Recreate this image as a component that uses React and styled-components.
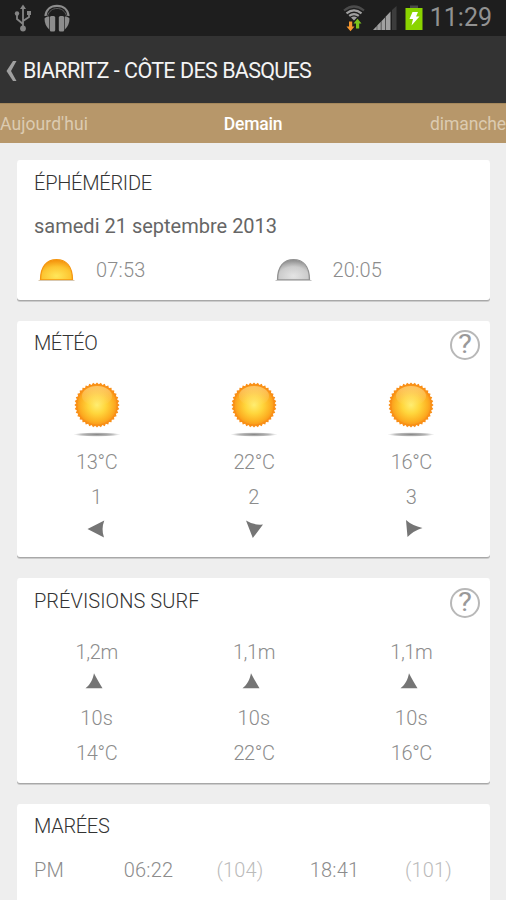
import React from 'react'
import styled, { createGlobalStyle } from 'styled-components'

const GlobalStyle = createGlobalStyle`
  * {
    box-sizing: border-box;
  }
  body {
    margin: 0;
    background-color: #eeeeee;
    font-family: Roboto, 'Liberation Sans', sans-serif;
  }
`

const Screen = styled.div`
  width: 506px;
  height: 900px;
  overflow: hidden;
  background-color: #eeeeee;
`

const StatusBar = styled.div`
  display: flex;
  align-items: center;
  justify-content: space-between;
  height: 36px;
  padding: 0 14px 0 12px;
  background-color: #1e1e1e;
`

const StatusGroup = styled.div`
  display: flex;
  align-items: center;
  gap: ${props => props.$gap}px;
`

const Clock = styled.span`
  font-size: 25px;
  font-weight: 400;
  line-height: 36px;
  color: #929292;
`

const Header = styled.header`
  display: flex;
  align-items: center;
  gap: 6px;
  height: 67px;
  padding: 2px 0 0 6px;
  background-color: #333333;
`

const Title = styled.h1`
  margin: 0;
  font-size: 21.5px;
  font-weight: 400;
  letter-spacing: -0.7px;
  word-spacing: 0.5px;
  white-space: nowrap;
  color: #f4f4f4;
`

const Tabs = styled.nav`
  display: flex;
  align-items: center;
  justify-content: space-between;
  height: 40px;
  padding-top: 1px;
  border-top: 1px solid #a5885c;
  background-color: #b7976a;
`

const Tab = styled.span`
  flex: 1;
  text-align: ${props => props.$align};
  font-size: 17.5px;
  font-weight: ${props => (props.$active ? 500 : 400)};
  letter-spacing: ${props => props.$spacing || 0}px;
  color: ${props => (props.$active ? '#ffffff' : '#dccbb1')};
`

const Cards = styled.main`
  display: flex;
  flex-direction: column;
  gap: 21px;
  padding: 17px 16px 0 17px;
`

const Card = styled.section`
  flex: none;
  height: ${props => props.$height}px;
  border-radius: 3px;
  background-color: #ffffff;
  box-shadow: 0 1px 0 #a8a8a8, 0 2px 0 #cccccc;
`

const CardHeader = styled.div`
  display: flex;
  align-items: center;
  justify-content: space-between;
  height: ${props => props.$height || 46}px;
  padding: 0 10px 0 17px;
`

const CardTitle = styled.h2`
  margin: 0;
  font-size: 20px;
  font-weight: 300;
  letter-spacing: ${props => props.$spacing || 0}px;
  color: #333333;
`

const Help = styled.span`
  display: flex;
  align-items: center;
  justify-content: center;
  width: 30px;
  height: 30px;
  margin-top: 3px;
  border: 2px solid #b8b8b8;
  border-radius: 50%;
  font-size: 25px;
  font-weight: 400;
  line-height: 26px;
  color: #999999;

  & > span {
    transform: scaleX(1.18);
  }
`

const DateLine = styled.div`
  height: 40px;
  padding-left: 17px;
  font-size: 20px;
  font-weight: 400;
  line-height: 40px;
  color: #666666;
`

const Ephemeris = styled.div`
  display: grid;
  grid-template-columns: 1fr 1fr;
  height: 48px;
`

const EphemerisItem = styled.div`
  display: flex;
  align-items: center;
  gap: 21px;
  padding-left: 21px;
`

const Columns = styled.div`
  display: grid;
  grid-template-columns: repeat(3, 1fr);
  padding-left: 1px;
`

const Column = styled.div`
  display: flex;
  flex-direction: column;
  align-items: center;
  padding-top: ${props => props.$top}px;
`

const Value = styled.span`
  margin-top: ${props => props.$top || 0}px;
  font-size: 20px;
  font-weight: 300;
  line-height: 35px;
  letter-spacing: ${props => (props.$tight ? -0.4 : 0.2)}px;
  color: ${props => (props.$faint ? '#bbbbbb' : '#8c8c8c')};
`

const ArrowBox = styled.div`
  display: flex;
  height: ${props => props.$height}px;
  padding-top: ${props => props.$top}px;
  padding-left: ${props => props.$left || 0}px;
  padding-right: ${props => props.$right || 0}px;
`

const TideRow = styled.div`
  display: grid;
  grid-template-columns: 69px 91px 92px 97px 91px;
  height: 44px;
  padding-left: 17px;
  align-items: center;
  text-align: center;

  & > :first-child {
    text-align: left;
  }
`

const UsbIcon = () => (
  <svg width='22' height='28' viewBox='0 0 22 28' fill='none' stroke='#858585' strokeWidth='1.8'>
    <path d='M11 24V4M11 20L5 15V10M11 17L17 13V9' />
    <path d='M11 0.5L14 5H8Z' fill='#858585' stroke='none' />
    <circle cx='11' cy='24.5' r='2.9' fill='#858585' stroke='none' />
    <circle cx='5' cy='9.5' r='2.2' fill='#858585' stroke='none' />
    <path d='M15 7h4v4h-4z' fill='#858585' stroke='none' />
  </svg>
)

const HeadphonesIcon = () => (
  <svg width='28' height='28' viewBox='0 0 28 28' fill='#8c8c8c'>
    <path d='M2.5 12C3 5.500 7.500 1.800 14 1.800S25 5.500 25.500 12' fill='none' stroke='#8c8c8c' strokeWidth='2.200' />
    <path d='M4.500 12C6 7 9.500 4.500 14 4.500S22 7 23.500 12' fill='none' stroke='#5c5c5c' strokeWidth='1' />
    <path d='M6.200 12.500V25.500C3.200 23 1.500 19 1.500 14.500C3 12.800 4.800 12.300 6.200 12.500Z' />
    <path d='M21.800 12.500V25.500C24.800 23 26.500 19 26.500 14.500C25 12.800 23.200 12.300 21.800 12.500Z' />
    <rect x='6.800' y='12' width='5.400' height='15.500' rx='1.500' />
    <rect x='15.800' y='12' width='5.400' height='15.500' rx='1.500' />
  </svg>
)

const WifiIcon = () => (
  <svg width='22' height='28' viewBox='0 0 22 28' fill='none'>
    <path d='M1 6.500Q11 -1.500 21 6.500' stroke='#4b4b4b' strokeWidth='2.200' />
    <path d='M3.500 9.300Q11 3.300 18.500 9.300' stroke='#a0a0a0' strokeWidth='2.200' />
    <path d='M6.200 11.900Q11 8.200 15.800 11.900' stroke='#a0a0a0' strokeWidth='2.200' />
    <path d='M8 13.500Q11 11.300 14 13.500L11 16.500Z' fill='#a0a0a0' />
    <path d='M6 17.500h3.200v5h2.300l-4 4.800-4-4.800H6z' fill='#f5962e' />
    <path d='M13 24.500h3.200v-5h2.300l-4-4.800-4 4.800H13z' fill='#7cc41c' />
  </svg>
)

const SignalIcon = () => (
  <svg width='26' height='26' viewBox='0 0 26 26'>
    <path d='M1 25L4.800 21V25ZM5.200 20.600L8.800 16.800V25H5.200ZM9.400 16.200L13 12.400V25H9.400ZM13.600 11.800L18.500 6.600V25H13.600Z' fill='#a0a0a0' />
    <path d='M20 5L24.500 1V25H20Z' fill='#3c3c3c' />
  </svg>
)

const BatteryIcon = () => (
  <svg width='18' height='26' viewBox='0 0 18 26'>
    <path d='M5 0.500h8v2.500H5z' fill='#4a4a4a' />
    <path d='M0.500 3h17v22h-17z' fill='#8ad400' />
    <path d='M7.500 7H13L11 11.500H14.500L6.500 20.500L8 14H4.500Z' fill='#ffffff' />
  </svg>
)

const BackIcon = () => (
  <svg width='11' height='22' viewBox='0 0 11 22' fill='#a0a0a0'>
    <path d='M7 1H10.500L5 11L10.500 21H7L0.500 11Z' />
  </svg>
)

const HalfSun = ({ id, inner, mid, edge, ground }) => (
  <svg width='37' height='24' viewBox='0 0 37 24'>
    <defs>
      <radialGradient id={id} cx='0.5' cy='0.8' r='0.75'>
        <stop offset='0' stopColor={inner} />
        <stop offset='0.6' stopColor={mid} />
        <stop offset='1' stopColor={edge} />
      </radialGradient>
    </defs>
    <path d='M2.500 22C2.500 8 9 1.700 18.500 1.700S34.500 8 34.500 22Z' fill={`url(#${id})`} stroke={edge} strokeWidth='1.3' />
    <path d='M0.500 22.500H36.500' stroke={ground} strokeWidth='1' />
  </svg>
)

const sunPoints = Array.from({ length: 72 }, (_, i) => {
  const r = i % 2 ? 20.8 : 22.6
  const a = (i * Math.PI) / 36
  return `${(24 + r * Math.cos(a)).toFixed(2)},${(24 + r * Math.sin(a)).toFixed(2)}`
}).join(' ')

const Sun = ({ id }) => (
  <svg width='48' height='58' viewBox='0 0 48 58'>
    <defs>
      <radialGradient id={`${id}-disc`}>
        <stop offset='0' stopColor='#ffee70' />
        <stop offset='0.45' stopColor='#ffd63c' />
        <stop offset='0.85' stopColor='#fdb022' />
        <stop offset='1' stopColor='#fa9d1c' />
      </radialGradient>
      <linearGradient id={`${id}-gloss`} x1='0' y1='0' x2='0' y2='1'>
        <stop offset='0' stopColor='#ffe0a0' stopOpacity='0.55' />
        <stop offset='1' stopColor='#ffe0a0' stopOpacity='0' />
      </linearGradient>
      <radialGradient id={`${id}-shade`}>
        <stop offset='0' stopColor='#8a8a8a' />
        <stop offset='0.6' stopColor='#b4b4b4' />
        <stop offset='1' stopColor='#ffffff' />
      </radialGradient>
    </defs>
    <polygon points={sunPoints} fill='#f98f16' />
    <circle cx='24' cy='24' r='19.5' fill={`url(#${id}-disc)`} />
    <ellipse cx='24' cy='15' rx='15' ry='10' fill={`url(#${id}-gloss)`} />
    <ellipse cx='24' cy='53.500' rx='23.500' ry='2.200' fill={`url(#${id}-shade)`} />
  </svg>
)

const Arrow = ({ points }) => (
  <svg width='18' height='18' viewBox='0 0 18 18' fill='#757575'>
    <path d={points} />
  </svg>
)

const SwellArrow = () => (
  <svg width='18' height='16' viewBox='0 0 18 16'>
    <path d='M9 0.300C11.500 5 14.500 10.500 17.500 15.300H0.500C5.500 11.500 7.500 7 9 0.300Z' fill='#757575' />
  </svg>
)

const weather = [
  { temp: '13°C', wind: '1', left: 0, right: 1, arrow: 'M0.500 9L17.300 0.500Q14 9 17 17.500Z' },
  { temp: '22°C', wind: '2', left: 1, right: 0, arrow: 'M1 0.500Q9 5.500 18 4.500L7.800 18Z' },
  { temp: '16°C', wind: '3', left: 5, right: 0, arrow: 'M1 0Q7 5.500 17.500 8Q9 10.500 2.500 17Z' }
]

const surf = [
  { height: '1,2m', period: '10s', temp: '14°C' },
  { height: '1,1m', period: '10s', temp: '22°C' },
  { height: '1,1m', period: '10s', temp: '16°C' }
]

export default () => {
  return (
    <Screen>
      <GlobalStyle />
      <StatusBar>
        <StatusGroup $gap={9}>
          <UsbIcon />
          <HeadphonesIcon />
        </StatusGroup>
        <StatusGroup $gap={7}>
          <WifiIcon />
          <SignalIcon />
          <BatteryIcon />
          <Clock>11:29</Clock>
        </StatusGroup>
      </StatusBar>
      <Header>
        <BackIcon />
        <Title>BIARRITZ - CÔTE DES BASQUES</Title>
      </Header>
      <Tabs>
        <Tab $align='left' $spacing={0.1}>Aujourd'hui</Tab>
        <Tab $align='center' $spacing={-0.2} $active>Demain</Tab>
        <Tab $align='right' $spacing={-0.1}>dimanche</Tab>
      </Tabs>
      <Cards>
        <Card $height={140}>
          <CardHeader>
            <CardTitle $spacing={-0.25}>ÉPHÉMÉRIDE</CardTitle>
          </CardHeader>
          <DateLine>samedi 21 septembre 2013</DateLine>
          <Ephemeris>
            <EphemerisItem>
              <HalfSun id='sunrise' inner='#ffe75a' mid='#fdc531' edge='#f5960f' ground='#d8c8b0' />
              <Value>07:53</Value>
            </EphemerisItem>
            <EphemerisItem>
              <HalfSun id='sunset' inner='#e4e4e4' mid='#cccccc' edge='#929292' ground='#c4c4c4' />
              <Value>20:05</Value>
            </EphemerisItem>
          </Ephemeris>
        </Card>
        <Card $height={236}>
          <CardHeader $height={44}>
            <CardTitle $spacing={-0.5}>MÉTÉO</CardTitle>
            <Help><span>?</span></Help>
          </CardHeader>
          <Columns>
            {weather.map((item, i) => (
              <Column key={i} $top={16}>
                <Sun id={`sun${i}`} />
                <Value $tight $top={6}>{item.temp}</Value>
                <Value>{item.wind}</Value>
                <ArrowBox $height={28} $top={5} $left={item.left} $right={item.right}>
                  <Arrow points={item.arrow} />
                </ArrowBox>
              </Column>
            ))}
          </Columns>
        </Card>
        <Card $height={205}>
          <CardHeader>
            <CardTitle $spacing={0.05}>PRÉVISIONS SURF</CardTitle>
            <Help><span>?</span></Help>
          </CardHeader>
          <Columns>
            {surf.map((item, i) => (
              <Column key={i} $top={11}>
                <Value $tight>{item.height}</Value>
                <ArrowBox $height={31} $top={3} $right={5}>
                  <SwellArrow />
                </ArrowBox>
                <Value>{item.period}</Value>
                <Value $tight>{item.temp}</Value>
              </Column>
            ))}
          </Columns>
        </Card>
        <Card $height={110}>
          <CardHeader $height={44}>
            <CardTitle $spacing={-0.3}>MARÉES</CardTitle>
          </CardHeader>
          <TideRow>
            <Value>PM</Value>
            <Value>06:22</Value>
            <Value $faint>(104)</Value>
            <Value>18:41</Value>
            <Value $faint>(101)</Value>
          </TideRow>
        </Card>
      </Cards>
    </Screen>
  )
}
